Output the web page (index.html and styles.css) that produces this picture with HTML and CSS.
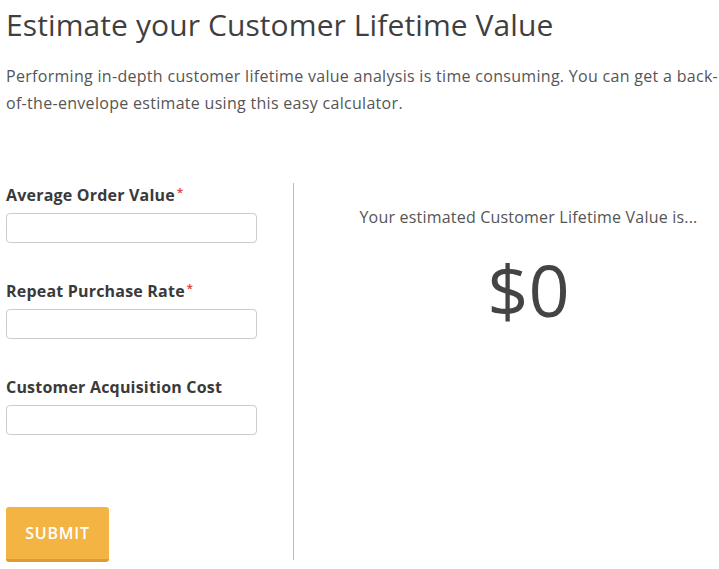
FILE: index.html
```html
<!DOCTYPE html>
<html>
<head>
<meta charset="utf-8">
<link rel="stylesheet" href="styles.css">
</head>
<body>
<div class="page">
  <h1 class="title">Estimate your Customer Lifetime Value</h1>
  <p class="intro">Performing in-depth customer lifetime value analysis is time consuming. You can get a back-of-the-envelope estimate using this easy calculator.</p>
  <div class="calc">
    <form class="form">
      <div class="field">
        <label class="label">Average Order Value<span class="req">*</span></label>
        <input class="input" type="text">
      </div>
      <div class="field">
        <label class="label">Repeat Purchase Rate<span class="req">*</span></label>
        <input class="input" type="text">
      </div>
      <div class="field">
        <label class="label">Customer Acquisition Cost</label>
        <input class="input" type="text">
      </div>
      <button class="submit" type="button">SUBMIT</button>
    </form>
    <div class="result">
      <div class="result-caption">Your estimated Customer Lifetime Value is...</div>
      <div class="result-value">$0</div>
    </div>
  </div>
</div>
</body>
</html>
```
FILE: styles.css
```css
html, body {
  margin: 0;
  padding: 0;
  background: #fff;
}
body {
  font-family: "Open Sans", sans-serif;
  color: #555;
}
.page {
  padding: 0 0 0 6px;
}
.title {
  margin: 0;
  padding-top: 7px;
  font-size: 30px;
  font-weight: 400;
  letter-spacing: 0.1px;
  line-height: 36px;
  color: #3f3f3f;
}
.intro {
  margin: 20px 0 0;
  font-size: 16px;
  letter-spacing: 0.3px;
  line-height: 27px;
  color: #555;
}
.calc {
  display: flex;
  margin-top: 67px;
}
.form {
  width: 287px;
  flex: none;
  display: flex;
  flex-direction: column;
}
.field {
  display: flex;
  flex-direction: column;
  margin-bottom: 37px;
}
.label {
  font-weight: 700;
  font-size: 16px;
  letter-spacing: 0.2px;
  line-height: 20px;
  color: #3a3a3a;
  margin-top: 1px;
  margin-bottom: 8px;
}
.req {
  color: #e8473b;
  font-size: 11px;
  vertical-align: top;
  margin-left: 2px;
  position: relative;
  top: -3px;
}
.input {
  width: 251px;
  height: 30px;
  box-sizing: border-box;
  border: 1px solid #ccc;
  border-radius: 4px;
  margin: 0;
}
.submit {
  margin-top: 35px;
  width: 103px;
  height: 55px;
  background: #f3b443;
  border: 0;
  border-bottom: 3px solid #dc9c33;
  border-radius: 3px;
  color: #fff;
  font-family: "Open Sans", sans-serif;
  font-weight: 600;
  font-size: 16px;
  letter-spacing: 0.8px;
  padding: 0;
}
.result {
  flex: 1;
  display: flex;
  flex-direction: column;
  align-items: center;
  border-left: 1px solid #bbb;
  margin-top: -1px;
  margin-bottom: 2px;
  padding-top: 24px;
  padding-left: 44px;
}
.result-caption {
  font-size: 16px;
  letter-spacing: 0.2px;
  line-height: 20px;
  color: #555;
}
.result-value {
  margin-top: 22px;
  font-size: 72px;
  line-height: 80px;
  color: #444;
}
```
